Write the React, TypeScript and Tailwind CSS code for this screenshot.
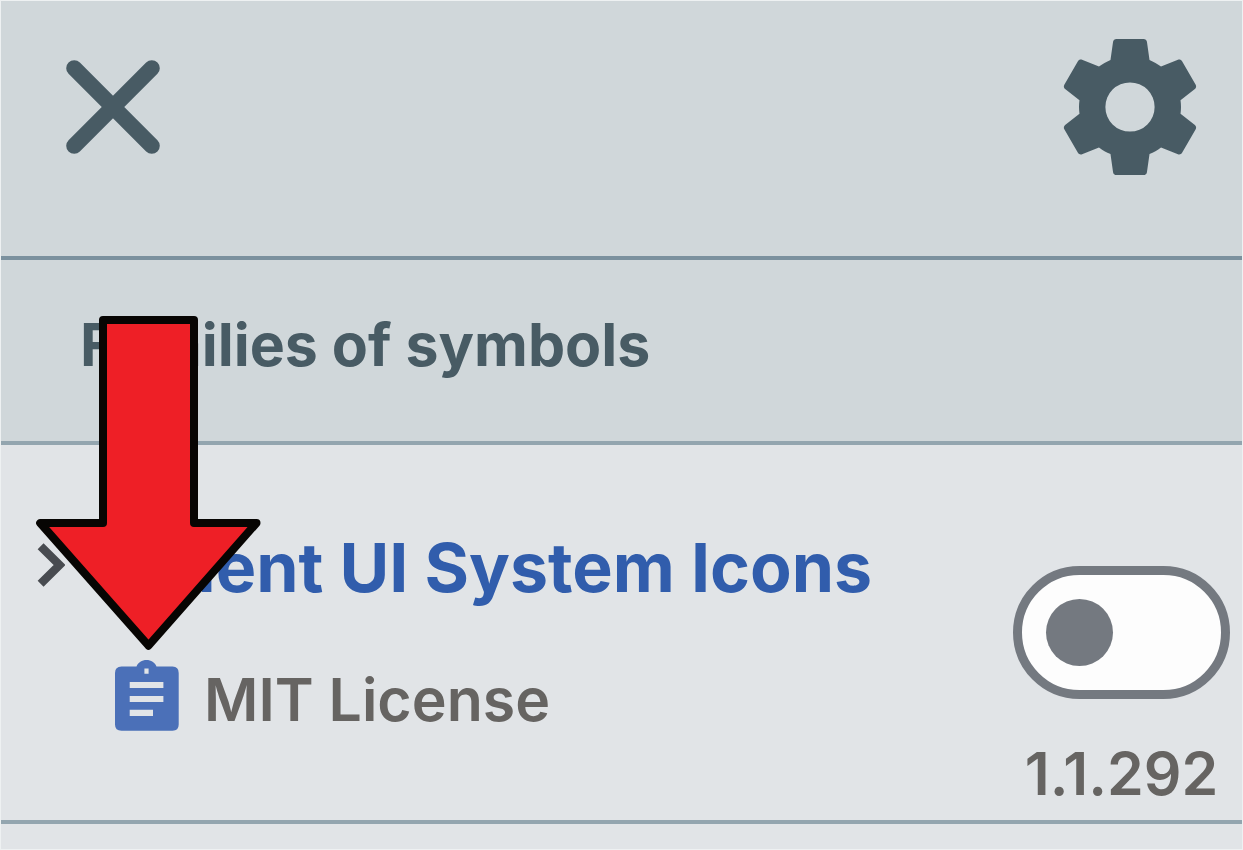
import { useState } from "react";

function CloseIcon() {
  return (
    <svg viewBox="0 0 94 94" className="size-[94px]" fill="none" stroke="currentColor" strokeWidth="16" strokeLinecap="round" aria-hidden="true">
      <path d="M8.2 8.2 85.8 85.8M85.8 8.2 8.2 85.8" />
    </svg>
  );
}

function SettingsIcon() {
  return (
    <svg viewBox="2 2 20 20" className="size-[136px]" fill="currentColor" aria-hidden="true">
      <path d="M19.43 12.98c.04-.32.07-.64.07-.98s-.03-.66-.07-.98l2.11-1.65c.19-.15.24-.42.12-.64l-2-3.46c-.12-.22-.39-.3-.61-.22l-2.49 1c-.52-.4-1.08-.73-1.69-.98l-.38-2.65C14.46 2.18 14.25 2 14 2h-4c-.25 0-.46.18-.49.42l-.38 2.65c-.61.25-1.17.59-1.69.98l-2.49-1c-.23-.09-.49 0-.61.22l-2 3.46c-.13.22-.07.49.12.64l2.11 1.65c-.04.32-.07.65-.07.98s.03.66.07.98l-2.11 1.65c-.19.15-.24.42-.12.64l2 3.46c.12.22.39.3.61.22l2.49-1c.52.4 1.08.73 1.69.98l.38 2.65c.03.24.24.42.49.42h4c.25 0 .46-.18.49-.42l.38-2.65c.61-.25 1.17-.59 1.69-.98l2.49 1c.23.09.49 0 .61-.22l2-3.46c.12-.22.07-.49-.12-.64l-2.11-1.65zM12 15.62a3.62 3.62 0 1 1 0-7.24 3.62 3.62 0 0 1 0 7.24z" />
    </svg>
  );
}

function ChevronIcon() {
  return (
    <svg viewBox="0 0 28 44" className="h-[44px] w-[28px]" fill="none" stroke="currentColor" strokeWidth="8.4" aria-hidden="true">
      <path d="M3.6 3.3 22.6 22 3.6 40.7" />
    </svg>
  );
}

function ClipboardIcon() {
  return (
    <svg viewBox="0 0 64 72" className="h-[72px] w-[64px]" fill="currentColor" fillRule="evenodd" aria-hidden="true">
      <path d="M6.5 6.5H21.5C23 2.5 27 0 31.5 0S40 2.5 41.5 6.5H57.5Q63.7 6.5 63.7 13V64.5Q63.7 70.7 57.5 70.7H6.5Q0 70.7 0 64.5V13Q0 6.5 6.5 6.5ZM29.4 8.5V13.8H33.6V8.5ZM14.7 22V28H48.4V22ZM14.7 36V42H48.4V36ZM14.7 49.7V56H38V49.7Z" />
    </svg>
  );
}

function PointerArrow() {
  return (
    <svg viewBox="36 316 225 334" className="pointer-events-none absolute top-[315px] left-[35px] h-[334px] w-[225px]" fill="#ee1f26" stroke="#070503" strokeWidth="8" strokeLinejoin="round" aria-hidden="true">
      <path d="M103 320H194V523H256.5L148.5 645.7 40.2 523H103Z" />
    </svg>
  );
}

export default function App() {
  const [enabled, setEnabled] = useState(false);
  const [open, setOpen] = useState(false);

  return (
    <main className="relative flex min-h-screen flex-col border border-[#eef1f2] bg-[#e1e4e7] font-['Inter',sans-serif]">
      <header className="flex items-start justify-between border-b-4 border-[#7b919e] bg-[#d0d7da] pt-[38px] pr-[44px] pb-[81px] pl-[65px] text-[#485b64]">
        <button type="button" aria-label="Close" className="mt-[21px]">
          <CloseIcon />
        </button>
        <button type="button" aria-label="Settings">
          <SettingsIcon />
        </button>
      </header>

      <section className="border-b-4 border-[#93a5af] bg-[#d0d7da] px-[79px] pt-[49px] pb-[60px]">
        <h1 className="text-[59px] leading-[72px] font-bold text-[#485b64]">Families of symbols</h1>
      </section>

      <section className="flex items-start justify-between border-b-4 border-[#93a5af] pr-[12px] pb-[9px] pl-[36px]">
        <div className="flex items-start gap-[50px] pt-[82px]">
          <button type="button" aria-label="Show symbols" aria-expanded={open} onClick={() => setOpen(!open)} className="mt-[16px] text-[#484b50]">
            <ChevronIcon />
          </button>
          <div className="flex flex-col gap-[53px]">
            <h2 className="text-[68px] leading-[80px] font-bold text-[#315dac]">Fluent UI System Icons</h2>
            <a href="#license" className="flex items-start gap-[25px] text-[59px] leading-[80px] font-semibold text-[#666462]">
              <span className="text-[#4b70b8]">
                <ClipboardIcon />
              </span>
              MIT License
            </a>
          </div>
        </div>
        <div className="flex flex-col items-center gap-[39px] pt-[121px]">
          <input
            type="checkbox"
            role="switch"
            aria-label="Enable Fluent UI System Icons"
            checked={enabled}
            onChange={(e) => setEnabled(e.target.checked)}
            className="flex h-[133px] w-[217px] appearance-none items-center rounded-full border-[9px] border-[#747980] bg-[#fdfdfd] px-6 before:size-[67px] before:rounded-full before:bg-[#747980] before:content-[''] checked:justify-end"
          />
          <span className="pb-px text-[59px] leading-[72px] font-semibold text-[#666462]">1.1.292</span>
        </div>
      </section>

      <PointerArrow />
    </main>
  );
}
